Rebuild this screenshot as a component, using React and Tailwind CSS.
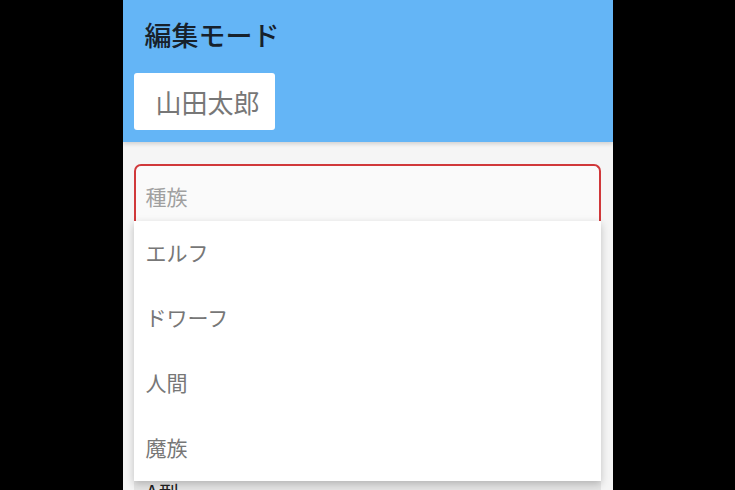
export default function App() {
  const font = { fontFamily: '"Noto Sans CJK JP", "Noto Sans", sans-serif' };
  const items = ["エルフ", "ドワーフ", "人間", "魔族"];
  return (
    <div className="w-[735px] h-[490px] bg-black flex justify-center overflow-hidden" style={font}>
      <div className="w-[490px] h-[490px] bg-[#f5f5f5] flex flex-col relative overflow-hidden">
        <header className="bg-[#64b5f6] h-[142px] shrink-0 flex flex-col shadow-[0_2px_4px_rgba(0,0,0,0.15)] relative z-10">
          <h1 className="pl-[22px] pt-[16px] text-[27px] leading-[38px] font-medium text-[#17212b]">編集モード</h1>
          <div className="ml-[11px] mt-[19px] w-[141px] h-[57px] bg-white rounded-[3px] flex items-center pl-[22px] text-[26px] text-[#777777]">
            山田太郎
          </div>
        </header>
        <main className="flex flex-col pl-[11px] pr-[12px] relative">
          <div className="mt-[22px] h-[120px] bg-[#fafafa] border-2 border-b-0 border-[#d0383a] rounded-t-[7px] pl-[10px] pt-[15px] text-[21px] leading-[30px] text-[#a0a0a0]">
            種族
          </div>
          <div className="mt-[196px] h-[40px] bg-[#e5e5e5] pl-[12px] text-[21px] leading-[24px] text-[#222222]">
            A型
          </div>
          <div className="absolute left-[11px] right-[12px] top-[79px] bg-white shadow-[0_3px_8px_rgba(0,0,0,0.22)] flex flex-col z-20">
            {items.map((t) => (
              <div key={t} className="h-[65px] flex items-center pl-[12px] pb-[1px] text-[21px] text-[#777777]">
                {t}
              </div>
            ))}
          </div>
        </main>
      </div>
    </div>
  );
}
